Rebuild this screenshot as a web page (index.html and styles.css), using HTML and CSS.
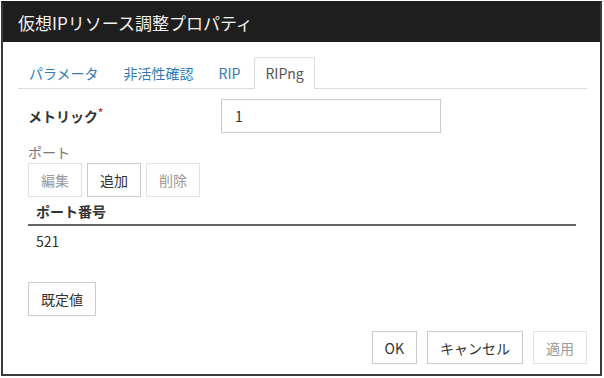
FILE: index.html
```html
<!DOCTYPE html>
<html lang="ja">
<head>
<meta charset="utf-8">
<link rel="stylesheet" href="styles.css">
</head>
<body>
<div class="dialog">
  <div class="titlebar">仮想IPリソース調整プロパティ</div>
  <div class="content">
    <ul class="tabs">
      <li class="tab">パラメータ</li>
      <li class="tab">非活性確認</li>
      <li class="tab">RIP</li>
      <li class="tab active">RIPng</li>
    </ul>
    <div class="form">
      <div class="field-row">
        <label class="field-label">メトリック<span class="req">*</span></label>
        <div class="text-input">1</div>
      </div>
      <div class="section-label">ポート</div>
      <div class="btn-group">
        <button class="btn disabled">編集</button>
        <button class="btn">追加</button>
        <button class="btn disabled">削除</button>
      </div>
      <table class="grid">
        <thead><tr><th>ポート番号</th></tr></thead>
        <tbody><tr><td>521</td></tr></tbody>
      </table>
      <button class="btn default-btn">既定値</button>
    </div>
    <div class="footer">
      <button class="btn ok">OK</button>
      <button class="btn">キャンセル</button>
      <button class="btn disabled">適用</button>
    </div>
  </div>
</div>
</body>
</html>
```

FILE: styles.css
```css
html, body {
  margin: 0;
  padding: 0;
  background: #ffffff;
}
body {
  font-family: "Noto Sans CJK JP", "Noto Sans", sans-serif;
  font-size: 14px;
  color: #333333;
}
.dialog {
  box-sizing: border-box;
  margin: 1px 0 0 1px;
  width: 601px;
  height: 375px;
  border: 2px solid #3a3a3a;
  border-top-color: #1e1e1e;
  display: flex;
  flex-direction: column;
  background: #ffffff;
}
.titlebar {
  height: 39px;
  line-height: 39px;
  background: #1e1e1e;
  color: #f2f2f2;
  font-size: 17px;
  padding-left: 15px;
  white-space: nowrap;
}
.content {
  flex: 1;
  padding: 15px 13px 0 15px;
  display: flex;
  flex-direction: column;
}
.tabs {
  list-style: none;
  margin: 0;
  padding: 0;
  display: flex;
  border-bottom: 1px solid #dddddd;
  height: 31px;
}
.tab {
  box-sizing: border-box;
  height: 32px;
  line-height: 30px;
  padding: 0 10px;
  margin-right: 3px;
  border: 1px solid transparent;
  border-bottom: none;
  color: #337ab7;
  white-space: nowrap;
}
.tab.active {
  border-color: #dddddd;
  border-radius: 3px 3px 0 0;
  background: #ffffff;
  color: #555555;
  padding: 0 10px 0 10px;
}
.form {
  padding: 10px 10px 0 10px;
  display: flex;
  flex-direction: column;
  align-items: flex-start;
}
.field-row {
  display: flex;
  align-items: center;
}
.field-label {
  width: 193px;
  font-weight: bold;
  color: #333333;
}
.req {
  color: #c9302c;
  font-size: 10px;
  vertical-align: top;
  position: relative;
  top: -2px;
}
.text-input {
  box-sizing: border-box;
  width: 220px;
  height: 34px;
  line-height: 32px;
  border: 1px solid #cccccc;
  padding-left: 13px;
  color: #333333;
}
.section-label {
  margin-top: 9px;
  line-height: 20px;
  height: 20px;
  color: #777777;
}
.btn-group {
  margin-top: 1px;
  display: flex;
  gap: 5px;
}
.btn {
  box-sizing: border-box;
  height: 34px;
  padding: 0 12px;
  border: 1px solid #cccccc;
  background: #ffffff;
  font-family: inherit;
  font-size: 14px;
  color: #333333;
  border-radius: 0;
  white-space: nowrap;
}
.btn.disabled {
  border-color: #e3e3e3;
  color: #9a9a9a;
}
.grid {
  width: 548px;
  border-collapse: collapse;
}
.grid th {
  text-align: left;
  font-weight: bold;
  height: 27px;
  padding: 0 0 0 8px;
  border-bottom: 2px solid #666666;
  line-height: 26px;
}
.grid td {
  height: 30px;
  padding: 0 0 0 8px;
  line-height: 30px;
}
.default-btn {
  margin-top: 26px;
}
.footer {
  margin-top: 15px;
  display: flex;
  justify-content: flex-end;
  gap: 10px;
}
.footer .btn {
  height: 33px;
}
.btn.ok {
  padding: 0 12px;
}
```
